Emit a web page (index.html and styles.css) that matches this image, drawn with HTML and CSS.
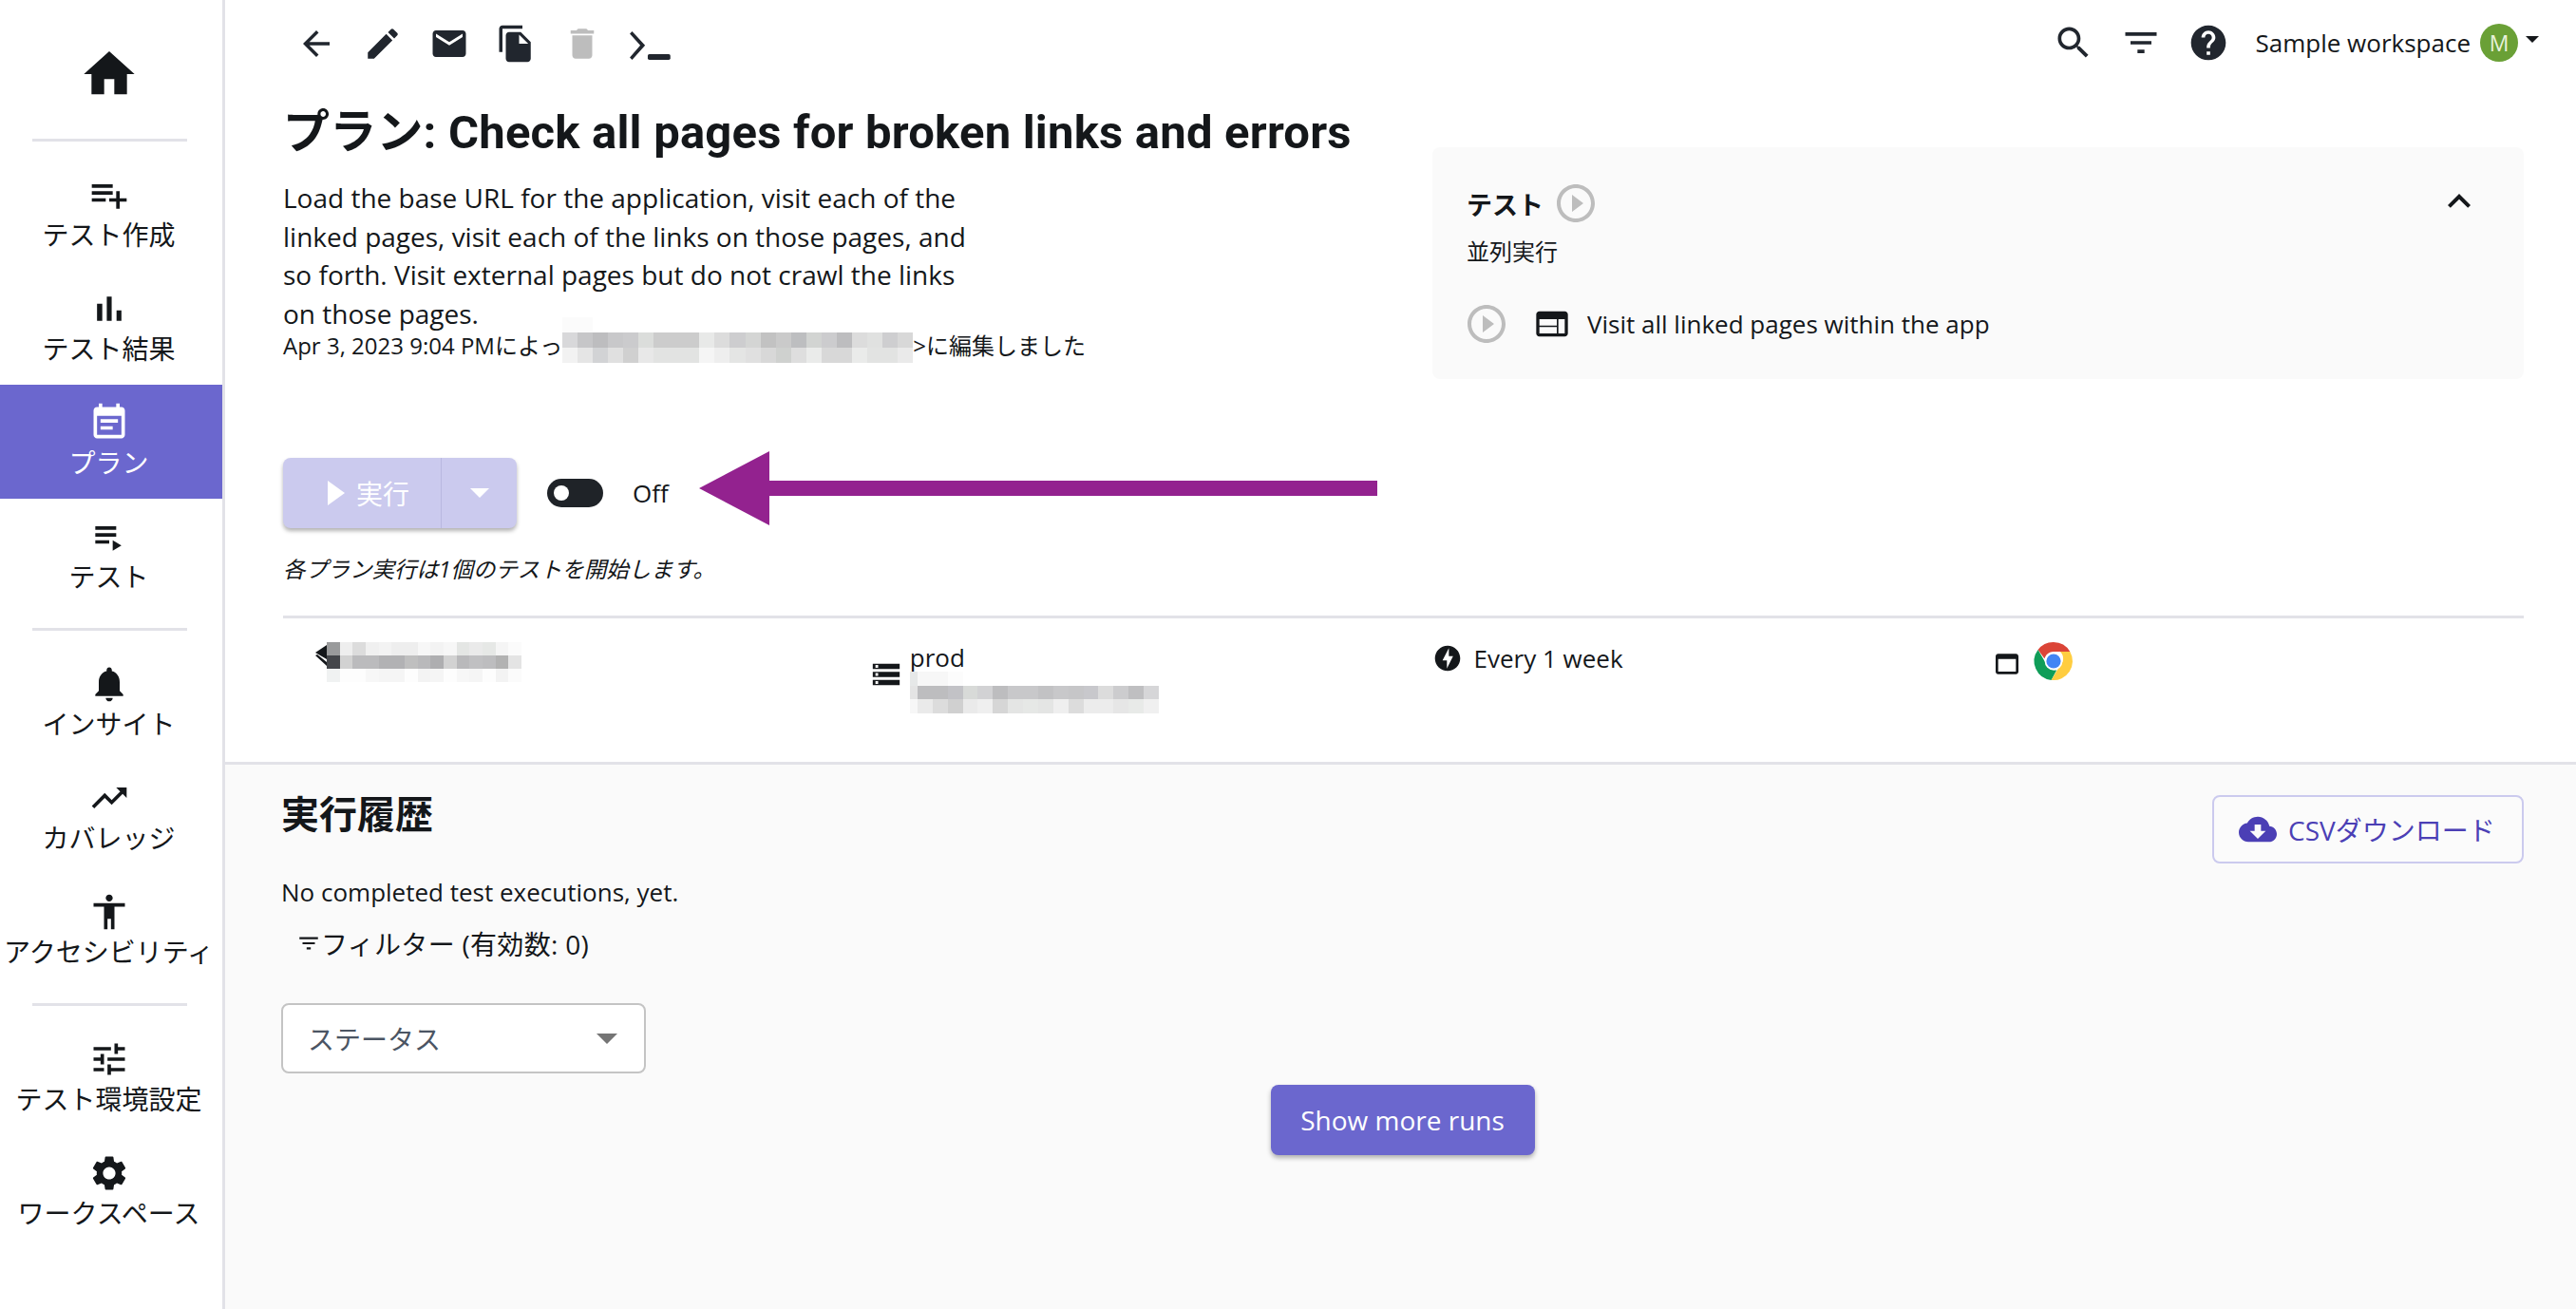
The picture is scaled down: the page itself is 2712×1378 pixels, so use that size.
FILE: index.html
```html
<!DOCTYPE html>
<html lang="ja">
  <head>
    <meta charset="UTF-8" />
    <meta name="viewport" content="width=device-width, initial-scale=1.0" />
    <title>プラン</title>
    <link rel="stylesheet" href="styles.css">
  </head>
  <body>
    <nav class="sidebar">
      <a class="nav-home"><svg class="icon-home" viewBox="0 0 24 24"><path d="M10 20v-6h4v6h5v-8h3L12 3 2 12h3v8z"/></svg></a>
      <div class="nav-line"></div>
      <a class="nav-item"><svg viewBox="0 0 24 24"><path d="M14 10H2v2h12v-2zm0-4H2v2h12V6zm4 8v-4h-2v4h-4v2h4v4h2v-4h4v-2h-4zM2 16h8v-2H2v2z"/></svg><span>テスト作成</span></a>
      <a class="nav-item"><svg viewBox="0 0 24 24"><path d="M5 9.2h3V19H5zM10.6 5h2.8v14h-2.8zm5.6 8H19v6h-2.8z"/></svg><span>テスト結果</span></a>
      <a class="nav-item active"><svg viewBox="0 0 24 24"><path d="M17 10H7v2h10v-2zm2-7h-1V1h-2v2H8V1H6v2H5c-1.11 0-1.99.9-1.99 2L3 19c0 1.1.89 2 2 2h14c1.1 0 2-.9 2-2V5c0-1.1-.9-2-2-2zm0 16H5V8h14v11zm-5-5H7v2h7v-2z"/></svg><span>プラン</span></a>
      <a class="nav-item"><svg viewBox="0 0 24 24"><path d="M4 10h12v2H4zm0-4h12v2H4zm0 8h8v2H4zm10 0v6l5-3z"/></svg><span>テスト</span></a>
      <div class="nav-line"></div>
      <a class="nav-item"><svg viewBox="0 0 24 24"><path d="M12 22c1.1 0 2-.9 2-2h-4c0 1.1.89 2 2 2zm6-6v-5c0-3.07-1.64-5.64-4.5-6.32V4c0-.83-.67-1.5-1.5-1.5s-1.5.67-1.5 1.5v.68C7.63 5.36 6 7.92 6 11v5l-2 2v1h16v-1l-2-2z"/></svg><span>インサイト</span></a>
      <a class="nav-item"><svg viewBox="0 0 24 24"><path d="M16 6l2.29 2.29-4.88 4.88-4-4L2 16.59 3.41 18l6-6 4 4 6.3-6.29L22 12V6z"/></svg><span>カバレッジ</span></a>
      <a class="nav-item"><svg viewBox="0 0 24 24"><path d="M12 2c1.1 0 2 .9 2 2s-.9 2-2 2-2-.9-2-2 .9-2 2-2zm9 7h-6v13h-2v-6h-2v6H9V9H3V7h18v2z"/></svg><span>アクセシビリティ</span></a>
      <div class="nav-line"></div>
      <a class="nav-item"><svg viewBox="0 0 24 24"><path d="M3 17v2h6v-2H3zM3 5v2h10V5H3zm10 16v-2h8v-2h-8v-2h-2v6h2zM7 9v2H3v2h4v2h2V9H7zm14 4v-2H11v2h10zm-6-4h2V7h4V5h-4V3h-2v6z"/></svg><span>テスト環境設定</span></a>
      <a class="nav-item"><svg viewBox="0 0 24 24"><path d="M19.14 12.94c.04-.3.06-.61.06-.94 0-.32-.02-.64-.07-.94l2.03-1.58c.18-.14.23-.41.12-.61l-1.92-3.32c-.12-.22-.37-.29-.59-.22l-2.39.96c-.5-.38-1.03-.7-1.62-.94l-.36-2.54c-.04-.24-.24-.41-.48-.41h-3.84c-.24 0-.43.17-.47.41l-.36 2.54c-.59.24-1.13.57-1.62.94l-2.39-.96c-.22-.08-.47 0-.59.22L2.74 8.87c-.12.21-.08.47.12.61l2.03 1.58c-.05.3-.09.63-.09.94s.02.64.07.94l-2.03 1.58c-.18.14-.23.41-.12.61l1.92 3.32c.12.22.37.29.59.22l2.39-.96c.5.38 1.03.7 1.62.94l.36 2.54c.05.24.24.41.48.41h3.84c.24 0 .44-.17.47-.41l.36-2.54c.59-.24 1.13-.56 1.62-.94l2.39.96c.22.08.47 0 .59-.22l1.92-3.32c.12-.22.07-.47-.12-.61l-2.01-1.58zM12 15.6c-1.98 0-3.6-1.62-3.6-3.6s1.62-3.6 3.6-3.6 3.6 1.62 3.6 3.6-1.62 3.6-3.6 3.6z"/></svg><span>ワークスペース</span></a>
    </nav>

    <main class="main">
      <div class="toolbar">
        <div class="toolbar-left">
          <svg class="tool" viewBox="0 0 24 24"><path d="M20 11H7.83l5.59-5.59L12 4l-8 8 8 8 1.41-1.41L7.83 13H20v-2z"/></svg>
          <svg class="tool" viewBox="0 0 24 24"><path d="M3 17.25V21h3.75L17.81 9.94l-3.75-3.75L3 17.25zM20.71 7.04c.39-.39.39-1.02 0-1.41l-2.34-2.34c-.39-.39-1.02-.39-1.41 0l-1.83 1.83 3.75 3.75 1.83-1.83z"/></svg>
          <svg class="tool" viewBox="0 0 24 24"><path d="M20 4H4c-1.1 0-1.99.9-1.99 2L2 18c0 1.1.9 2 2 2h16c1.1 0 2-.9 2-2V6c0-1.1-.9-2-2-2zm0 4l-8 5-8-5V6l8 5 8-5v2z"/></svg>
          <svg class="tool" viewBox="0 0 24 24"><path d="M16 1H4c-1.1 0-2 .9-2 2v14h2V3h12V1zm-1 4l6 6v10c0 1.1-.9 2-2 2H7.99C6.89 23 6 22.1 6 21l.01-14c0-1.1.89-2 1.99-2h7zm-1 7h5.5L14 6.5V12z"/></svg>
          <svg class="tool tool-off" viewBox="0 0 24 24"><path d="M6 19c0 1.1.9 2 2 2h8c1.1 0 2-.9 2-2V7H6v12zM19 4h-3.5l-1-1h-5l-1 1H5v2h14V4z"/></svg>
          <svg class="tool tool-term" viewBox="0 0 24 24"><path d="M.6 6 2 4.6 9.8 13 2 21.7.6 20.3 6.9 13z"/><rect x="11.4" y="18.3" width="13.6" height="3.4" rx="1"/></svg>
        </div>
        <div class="toolbar-right">
          <svg class="tool-lg" viewBox="0 0 24 24"><path d="M15.5 14h-.79l-.28-.27C15.41 12.59 16 11.11 16 9.5 16 5.91 13.09 3 9.5 3S3 5.91 3 9.5 5.91 16 9.5 16c1.61 0 3.09-.59 4.23-1.57l.27.28v.79l5 4.99L20.49 19l-4.99-5zm-6 0C7.01 14 5 11.99 5 9.5S7.01 5 9.5 5 14 7.01 14 9.5 11.99 14 9.5 14z"/></svg>
          <svg class="tool-lg" viewBox="0 0 24 24"><path d="M10 18h4v-2h-4v2zM3 6v2h18V6H3zm3 7h12v-2H6v2z"/></svg>
          <svg class="tool-lg" viewBox="0 0 24 24"><path d="M12 2C6.48 2 2 6.48 2 12s4.48 10 10 10 10-4.48 10-10S17.52 2 12 2zm1 17h-2v-2h2v2zm2.07-7.75l-.9.92C13.45 12.9 13 13.5 13 15h-2v-.5c0-1.1.45-2.1 1.17-2.83l1.24-1.26c.37-.36.59-.86.59-1.41 0-1.1-.9-2-2-2s-2 .9-2 2H8c0-2.21 1.79-4 4-4s4 1.79 4 4c0 .88-.36 1.68-.93 2.25z"/></svg>
          <span class="workspace">Sample workspace</span>
          <span class="avatar">M</span>
          <span class="caret"></span>
        </div>
      </div>

      <section class="plan">
        <div class="plan-top">
          <div class="plan-info">
            <h1>プラン: Check all pages for broken links and errors</h1>
            <p class="desc">Load the base URL for the application, visit each of the linked pages, visit each of the links on those pages, and so forth. Visit external pages but do not crawl the links on those pages.</p>
            <div class="edited">
              <span>Apr 3, 2023 9:04 PMによっ</span>
              <svg class="mosaic" width="369" height="48" viewBox="0 0 23 3" preserveAspectRatio="none" shape-rendering="crispEdges">
                <g><rect x="0" y="0" width="2" height="1" fill="#fbfbfb"/></g>
                <rect x="0" y="1" width="1" height="1" fill="#d8d8da"/><rect x="1" y="1" width="1" height="1" fill="#c6c6c8"/><rect x="2" y="1" width="1" height="1" fill="#bdbdbf"/><rect x="3" y="1" width="1" height="1" fill="#c8c8ca"/><rect x="4" y="1" width="1" height="1" fill="#cbcbcd"/><rect x="5" y="1" width="1" height="1" fill="#dbdddb"/><rect x="6" y="1" width="3" height="1" fill="#cccccc"/><rect x="9" y="1" width="1" height="1" fill="#e8e9e8"/><rect x="10" y="1" width="1" height="1" fill="#dcdcdc"/><rect x="11" y="1" width="1" height="1" fill="#cdcdcf"/><rect x="12" y="1" width="1" height="1" fill="#d4d5d4"/><rect x="13" y="1" width="1" height="1" fill="#c2c2c2"/><rect x="14" y="1" width="1" height="1" fill="#cacaca"/><rect x="15" y="1" width="1" height="1" fill="#bdbec0"/><rect x="16" y="1" width="1" height="1" fill="#d2d4d2"/><rect x="17" y="1" width="1" height="1" fill="#ccccce"/><rect x="18" y="1" width="1" height="1" fill="#bdbdbf"/><rect x="19" y="1" width="1" height="1" fill="#dcdcdc"/><rect x="20" y="1" width="1" height="1" fill="#e0e1e0"/><rect x="21" y="1" width="1" height="1" fill="#ceced0"/><rect x="22" y="1" width="1" height="1" fill="#d8d8d8"/>
                <rect x="0" y="2" width="1" height="1" fill="#f2f2f2"/><rect x="1" y="2" width="1" height="1" fill="#e5e5e5"/><rect x="2" y="2" width="1" height="1" fill="#d2d3d5"/><rect x="3" y="2" width="1" height="1" fill="#e0e0e0"/><rect x="4" y="2" width="1" height="1" fill="#d0d0d0"/><rect x="5" y="2" width="1" height="1" fill="#e8e8e8"/><rect x="6" y="2" width="3" height="1" fill="#e2e3e2"/><rect x="9" y="2" width="1" height="1" fill="#f5f5f5"/><rect x="10" y="2" width="1" height="1" fill="#eeeeee"/><rect x="11" y="2" width="1" height="1" fill="#e4e5e4"/><rect x="12" y="2" width="1" height="1" fill="#e0e0e0"/><rect x="13" y="2" width="1" height="1" fill="#d8d8d8"/><rect x="14" y="2" width="1" height="1" fill="#cfd1cf"/><rect x="15" y="2" width="1" height="1" fill="#dedede"/><rect x="16" y="2" width="1" height="1" fill="#eaebea"/><rect x="17" y="2" width="2" height="1" fill="#d8d8d8"/><rect x="19" y="2" width="1" height="1" fill="#eaebea"/><rect x="20" y="2" width="2" height="1" fill="#e2e3e2"/><rect x="22" y="2" width="1" height="1" fill="#eaeaea"/>
              </svg>
              <span>&gt;に編集しました</span>
            </div>
            <div class="run-row">
              <div class="run-btn">
                <span class="run-main"><i class="play"></i>実行</span>
                <span class="run-drop"><i></i></span>
              </div>
              <span class="toggle"><i></i></span>
              <span class="off">Off</span>
            </div>
            <p class="note">各プラン実行は1個のテストを開始します。</p>
          </div>

          <aside class="panel">
            <div class="panel-head">
              <div class="panel-title">
                <strong>テスト</strong>
                <svg class="play-ring" viewBox="0 0 24 24"><path d="M10 16.5l6-4.5-6-4.5v9zM12 2C6.48 2 2 6.48 2 12s4.48 10 10 10 10-4.48 10-10S17.52 2 12 2zm0 18c-4.41 0-8-3.59-8-8s3.59-8 8-8 8 3.59 8 8-3.59 8-8 8z"/></svg>
              </div>
              <svg class="chevron" viewBox="0 0 24 24"><path d="M12 8l-6 6 1.41 1.41L12 10.83l4.59 4.58L18 14z"/></svg>
            </div>
            <div class="panel-sub">並列実行</div>
            <div class="panel-test">
              <svg class="play-ring test-ring" viewBox="0 0 24 24"><path d="M10 16.5l6-4.5-6-4.5v9zM12 2C6.48 2 2 6.48 2 12s4.48 10 10 10 10-4.48 10-10S17.52 2 12 2zm0 18c-4.41 0-8-3.59-8-8s3.59-8 8-8 8 3.59 8 8-3.59 8-8 8z"/></svg>
              <svg class="web-icon" viewBox="0 0 24 24"><path d="M20 4H4c-1.1 0-1.99.9-1.99 2L2 18c0 1.1.9 2 2 2h16c1.1 0 2-.9 2-2V6c0-1.1-.9-2-2-2zm-5 14H4v-4h11v4zm0-5H4V9h11v4zm5 5h-4V9h4v9z"/></svg>
              <span>Visit all linked pages within the app</span>
            </div>
          </aside>
        </div>

        <div class="plan-meta">
          <div class="meta-col">
            <svg class="branch-icon" width="12" height="25" viewBox="0 0 12 25"><path d="M12 0v15L0 8zM0 11l2-1 10 8v4z"/></svg>
            <svg class="mosaic-a" width="205" height="42" viewBox="0 0 15 3" preserveAspectRatio="none" shape-rendering="crispEdges">
              <rect x="0" y="0" width="1" height="1" fill="#999a9b"/><rect x="1" y="0" width="1" height="1" fill="#eeeeee"/><rect x="2" y="0" width="1" height="1" fill="#dcdcdc"/><rect x="3" y="0" width="1" height="1" fill="#f0f0f0"/><rect x="4" y="0" width="1" height="1" fill="#f3f3f3"/><rect x="5" y="0" width="2" height="1" fill="#eeeeee"/><rect x="7" y="0" width="1" height="1" fill="#f7f7f7"/><rect x="8" y="0" width="1" height="1" fill="#f3f3f3"/><rect x="9" y="0" width="1" height="1" fill="#f7f7f7"/><rect x="10" y="0" width="1" height="1" fill="#e4e6e4"/><rect x="11" y="0" width="1" height="1" fill="#eaeaea"/><rect x="12" y="0" width="1" height="1" fill="#e6e8e6"/><rect x="13" y="0" width="1" height="1" fill="#f5f5f5"/><rect x="14" y="0" width="1" height="1" fill="#fbfbfb"/>
              <rect x="0" y="1" width="1" height="1" fill="#44464a"/><rect x="1" y="1" width="1" height="1" fill="#d2d2d2"/><rect x="2" y="1" width="2" height="1" fill="#bbbbbd"/><rect x="4" y="1" width="2" height="1" fill="#b2b2b4"/><rect x="6" y="1" width="1" height="1" fill="#bfbfbf"/><rect x="7" y="1" width="1" height="1" fill="#b9b9bb"/><rect x="8" y="1" width="1" height="1" fill="#aeaeb0"/><rect x="9" y="1" width="1" height="1" fill="#d2d2d2"/><rect x="10" y="1" width="1" height="1" fill="#b9b9bb"/><rect x="11" y="1" width="1" height="1" fill="#c0c0c2"/><rect x="12" y="1" width="1" height="1" fill="#bdbdbf"/><rect x="13" y="1" width="1" height="1" fill="#b2b2b2"/><rect x="14" y="1" width="1" height="1" fill="#e4e4e4"/>
              <rect x="0" y="2" width="1" height="1" fill="#f0f2f2"/><rect x="1" y="2" width="2" height="1" fill="#fdfdfd"/><rect x="3" y="2" width="1" height="1" fill="#f7f7f7"/><rect x="4" y="2" width="2" height="1" fill="#f5f5f5"/><rect x="6" y="2" width="1" height="1" fill="#fdfdfd"/><rect x="7" y="2" width="1" height="1" fill="#f3f3f3"/><rect x="8" y="2" width="1" height="1" fill="#f5f5f5"/><rect x="9" y="2" width="1" height="1" fill="#fdfdfd"/><rect x="10" y="2" width="1" height="1" fill="#f7f7f7"/><rect x="11" y="2" width="1" height="1" fill="#f5f5f5"/><rect x="12" y="2" width="1" height="1" fill="#fdfdfd"/><rect x="13" y="2" width="1" height="1" fill="#f3f3f3"/><rect x="14" y="2" width="1" height="1" fill="#fbfbfb"/>
            </svg>
          </div>
          <div class="meta-col">
            <svg class="server-icon" viewBox="0 0 24 24"><path d="M2 20h20v-4H2v4zm2-3h2v2H4v-2zM2 4v4h20V4H2zm4 3H4V5h2v2zm-4 7h20v-4H2v4zm2-3h2v2H4v-2z"/></svg>
            <div class="env">
              <span>prod</span>
              <svg class="mosaic-b" width="262" height="44" viewBox="0 0 33 3" preserveAspectRatio="none" shape-rendering="crispEdges">
                <rect x="0" y="0" width="1" height="1" fill="#e6e8e8"/><rect x="1" y="0" width="4" height="1" fill="#f7f7f7"/><rect x="5" y="0" width="2" height="1" fill="#fcfcfc"/>
                <rect x="0" y="1" width="1" height="1" fill="#e4e4e4"/><rect x="1" y="1" width="4" height="1" fill="#bdbdbf"/><rect x="5" y="1" width="2" height="1" fill="#c2c2c6"/><rect x="7" y="1" width="2" height="1" fill="#d8dad8"/><rect x="9" y="1" width="2" height="1" fill="#d2d2d4"/><rect x="11" y="1" width="2" height="1" fill="#bdbdbf"/><rect x="13" y="1" width="4" height="1" fill="#c8c8ca"/><rect x="17" y="1" width="2" height="1" fill="#c2c2c4"/><rect x="19" y="1" width="2" height="1" fill="#c8c8ca"/><rect x="21" y="1" width="2" height="1" fill="#c6c6c8"/><rect x="23" y="1" width="2" height="1" fill="#c8c8cc"/><rect x="25" y="1" width="2" height="1" fill="#dcdcdc"/><rect x="27" y="1" width="2" height="1" fill="#ccccce"/><rect x="29" y="1" width="2" height="1" fill="#bfbfc1"/><rect x="31" y="1" width="2" height="1" fill="#d6d6d8"/>
                <rect x="0" y="2" width="1" height="1" fill="#f7f7f7"/><rect x="1" y="2" width="2" height="1" fill="#eaeaea"/><rect x="3" y="2" width="2" height="1" fill="#dcdcdc"/><rect x="5" y="2" width="2" height="1" fill="#d0d0d0"/><rect x="7" y="2" width="2" height="1" fill="#eaeaea"/><rect x="9" y="2" width="2" height="1" fill="#efefef"/><rect x="11" y="2" width="2" height="1" fill="#d6d6d6"/><rect x="13" y="2" width="2" height="1" fill="#e4e5e4"/><rect x="15" y="2" width="2" height="1" fill="#e6e8e6"/><rect x="17" y="2" width="2" height="1" fill="#e4e5e4"/><rect x="19" y="2" width="2" height="1" fill="#efefef"/><rect x="21" y="2" width="2" height="1" fill="#dcdcdc"/><rect x="23" y="2" width="4" height="1" fill="#ececec"/><rect x="27" y="2" width="2" height="1" fill="#e6e6e6"/><rect x="29" y="2" width="2" height="1" fill="#e8eae8"/><rect x="31" y="2" width="2" height="1" fill="#f0f0f0"/>
              </svg>
            </div>
          </div>
          <div class="meta-col">
            <svg class="bolt-icon" viewBox="0 0 24 24"><path d="M12 2.02c-5.51 0-9.98 4.47-9.98 9.98s4.47 9.98 9.98 9.98 9.98-4.47 9.98-9.98S17.51 2.02 12 2.02zM11.48 20v-6.26H8L13 4v6.26h3.35L11.48 20z"/></svg>
            <span class="every">Every 1 week</span>
          </div>
          <div class="meta-col">
            <svg class="asset-icon" viewBox="0 0 24 24"><path d="M19 4H5c-1.11 0-2 .9-2 2v12c0 1.1.89 2 2 2h14c1.1 0 2-.9 2-2V6c0-1.1-.89-2-2-2zm0 14H5V8h14v10z"/></svg>
            <svg class="chrome" viewBox="0 0 48 48">
              <path fill="#db4437" d="M24 4a20 20 0 0 1 17.3 10H24a10 10 0 0 0-9.6 7.2L7.6 12A20 20 0 0 1 24 4z"/>
              <path fill="#0f9d58" d="M7.6 12l8.7 15a10 10 0 0 0 10.9 6.5L21.6 43.9A20 20 0 0 1 7.6 12z"/>
              <path fill="#ffcd40" d="M41.3 14A20 20 0 0 1 21.6 43.9l8.8-14.9A10 10 0 0 0 31 14z"/>
              <circle cx="24" cy="24" r="9.4" fill="#fff"/>
              <circle cx="24" cy="24" r="7.6" fill="#4285f4"/>
            </svg>
          </div>
        </div>
      </section>

      <section class="history">
        <div class="history-head">
          <h2>実行履歴</h2>
          <a class="csv-btn">
            <svg viewBox="0 0 24 24"><path d="M19.35 10.04C18.67 6.59 15.64 4 12 4 9.11 4 6.6 5.64 5.35 8.04 2.34 8.36 0 10.91 0 14c0 3.31 2.69 6 6 6h13c2.76 0 5-2.24 5-5 0-2.64-2.05-4.78-4.65-4.96zM17 13l-5 5-5-5h3V9h4v4h3z"/></svg>
            CSVダウンロード
          </a>
        </div>
        <p class="empty">No completed test executions, yet.</p>
        <div class="filter-toggle">
          <svg viewBox="0 0 24 24"><path d="M10 18h4v-2h-4v2zM3 6v2h18V6H3zm3 7h12v-2H6v2z"/></svg>
          <span>フィルター (有効数: 0)</span>
        </div>
        <div class="select-box"><span>ステータス</span><i></i></div>
        <div class="more-row"><a class="more-btn">Show more runs</a></div>
      </section>

      <svg class="arrow" width="714" height="78" viewBox="0 0 714 78"><path d="M0 39 74 0v31h640v16H74v31z"/></svg>
    </main>
  </body>
</html>
```

FILE: styles.css
```css
* {
  box-sizing: border-box;
  margin: 0;
  padding: 0;
}

body {
  display: flex;
  min-height: 100vh;
  overflow: hidden;
  background-color: #fff;
  color: #14171a;
  font-family: "Open Sans", "Noto Sans CJK JP", sans-serif;
  font-size: 28px;
}

svg {
  display: block;
  flex-shrink: 0;
  fill: currentColor;
}

/* sidebar */
.sidebar {
  width: 237px;
  flex-shrink: 0;
  border-right: 3px solid #e2e2e8;
  font-family: "Noto Sans CJK JP", sans-serif;
}

.nav-home {
  display: flex;
  justify-content: center;
  height: 130px;
  padding: 46px 5px 0 0;
}

.icon-home {
  width: 64px;
  height: 64px;
}

.nav-line {
  width: 163px;
  height: 3px;
  margin: 16px 0 16px 34px;
  background-color: #e2e2e8;
}

.nav-item {
  display: flex;
  flex-direction: column;
  align-items: center;
  height: 120px;
  padding: 18px 5px 0 0;
  white-space: nowrap;
}

.nav-item svg {
  width: 44px;
  height: 44px;
}

.nav-item span {
  line-height: 38px;
}

.nav-item.active {
  background-color: #6b67ce;
  color: #fff;
}

/* main */
.main {
  position: relative;
  flex: 1;
  display: flex;
  flex-direction: column;
}

.toolbar {
  display: flex;
  justify-content: space-between;
  align-items: center;
  height: 92px;
  padding: 0 39px 0 298px;
  margin-left: -237px;
  color: #21262e;
}

.toolbar-left {
  display: flex;
  gap: 28px;
  padding-left: 14px;
}

.tool {
  width: 42px;
  height: 42px;
}

.tool-off {
  color: #bdbdbd;
}

.tool-term {
  overflow: visible;
}

.tool-lg {
  width: 44px;
  height: 44px;
}

.toolbar-right {
  display: flex;
  align-items: center;
  gap: 27px;
  margin-top: -2px;
}

.workspace {
  margin-left: 1px;
  font-size: 26px;
  color: #14171a;
}

.avatar {
  display: flex;
  justify-content: center;
  align-items: center;
  width: 40px;
  height: 40px;
  margin-left: -17px;
  border-radius: 50%;
  background-color: #6aa036;
  color: #e8f2dc;
  font-size: 23px;
}

.caret {
  width: 0;
  height: 0;
  margin: -8px 0 0 -19px;
  border-left: 7px solid transparent;
  border-right: 7px solid transparent;
  border-top: 7px solid #14171a;
}

.plan {
  padding: 0 55px 0 61px;
}

.plan-top {
  display: flex;
}

.plan-info {
  width: 1210px;
  flex-shrink: 0;
}

h1 {
  margin-top: 18px;
  font-family: "Roboto", "Noto Sans CJK JP", sans-serif;
  font-size: 49px;
  font-weight: 700;
  letter-spacing: 0.2px;
  line-height: 60px;
  white-space: nowrap;
}

.desc {
  width: 740px;
  margin-top: 18px;
  line-height: 40.5px;
}

.edited {
  display: flex;
  align-items: center;
  height: 26px;
  margin-top: -1px;
  font-size: 24px;
  white-space: nowrap;
}

.mosaic {
  margin-top: -8px;
}

.run-row {
  display: flex;
  align-items: center;
  margin-top: 107px;
}

.run-btn {
  display: flex;
  width: 246px;
  height: 74px;
  border-radius: 8px;
  background-color: #cbcaee;
  color: #fff;
  box-shadow: 0 3px 4px rgba(0, 0, 0, 0.3);
}

.run-main {
  display: flex;
  justify-content: center;
  align-items: center;
  gap: 12px;
  width: 167px;
  padding-left: 14px;
  border-right: 1px solid #b9b8e0;
}

.play {
  width: 0;
  height: 0;
  border-top: 13px solid transparent;
  border-bottom: 13px solid transparent;
  border-left: 18px solid #fff;
}

.run-drop {
  flex: 1;
  display: flex;
  justify-content: center;
  align-items: center;
}

.run-drop i {
  width: 0;
  height: 0;
  border-left: 10px solid transparent;
  border-right: 10px solid transparent;
  border-top: 10px solid #fff;
}

.toggle {
  display: flex;
  align-items: center;
  width: 59px;
  height: 30px;
  margin-left: 32px;
  padding-left: 7px;
  border-radius: 15px;
  background-color: #1f2328;
}

.toggle i {
  width: 16px;
  height: 16px;
  border-radius: 50%;
  background-color: #fff;
}

.off {
  margin-left: 31px;
  font-size: 26px;
}

.note {
  margin-top: 26px;
  font-size: 23.4px;
  font-style: italic;
  line-height: 34px;
}

.panel {
  flex: 1;
  height: 244px;
  margin-top: 63px;
  padding: 36px 36px 0;
  border-radius: 8px;
  background-color: #fafafa;
}

.panel-head {
  display: flex;
  justify-content: space-between;
  align-items: center;
  height: 46px;
}

.panel-title {
  display: flex;
  align-items: center;
  gap: 10px;
}

.panel-title strong {
  font-size: 27px;
}

.play-ring {
  width: 48px;
  height: 48px;
  color: #bdbdbd;
}

.test-ring {
  margin-left: -3px;
}

.chevron {
  width: 48px;
  height: 48px;
  margin: -4px 8px 0 0;
}

.panel-sub {
  margin-top: 11px;
  font-size: 24px;
  line-height: 34px;
}

.panel-test {
  display: flex;
  align-items: center;
  height: 46px;
  margin-top: 36px;
  font-size: 26px;
}

.web-icon {
  width: 40px;
  height: 40px;
  margin-left: 25px;
  margin-right: 17px;
}

.plan-meta {
  display: grid;
  grid-template-columns: repeat(4, 1fr);
  height: 154px;
  margin-top: 32px;
  padding-top: 18px;
  border-top: 3px solid #e2e2e8;
  font-size: 26px;
}

.meta-col {
  display: flex;
  align-items: flex-start;
  padding-left: 32px;
}

.branch-icon {
  margin: 10px 0 0 2px;
}

.mosaic-a {
  margin-top: 7px;
}

.server-icon {
  width: 34px;
  height: 34px;
  margin: 24px 8px 0 -4px;
}

.env {
  margin-top: 5px;
  line-height: 36px;
}

.mosaic-b {
  margin-top: -3px;
}

.bolt-icon {
  width: 32px;
  height: 32px;
  margin: 8px 12px 0 -2px;
}

.every {
  margin-top: 6px;
}

.asset-icon {
  width: 32px;
  height: 32px;
  margin: 14px 9px 0 -2px;
}

.chrome {
  width: 48px;
  height: 48px;
  margin-top: 3px;
}

/* history */
.history {
  flex: 1;
  padding: 32px 55px 0 59px;
  border-top: 3px solid #e2e2e8;
  background-color: #fafafa;
}

.history-head {
  display: flex;
  justify-content: space-between;
  align-items: flex-start;
}

h2 {
  font-size: 40px;
  font-weight: 700;
  line-height: 40px;
}

.csv-btn {
  display: flex;
  align-items: center;
  gap: 12px;
  width: 328px;
  height: 72px;
  padding-left: 26px;
  border: 2px solid #cbcaee;
  border-radius: 8px;
  color: #4b3fb5;
  background-color: #fbfbfb;
}

.csv-btn svg {
  width: 40px;
  height: 40px;
}

.empty {
  margin-top: 10px;
  font-size: 26px;
  line-height: 40px;
}

.filter-toggle {
  display: flex;
  align-items: center;
  height: 40px;
  margin-top: 14px;
  padding-left: 16px;
  letter-spacing: 0.3px;
}

.filter-toggle svg {
  width: 26px;
  height: 26px;
}

.select-box {
  display: flex;
  justify-content: space-between;
  align-items: center;
  width: 384px;
  height: 74px;
  margin-top: 43px;
  padding: 0 28px 0 26px;
  border: 2px solid #c4c4c4;
  border-radius: 8px;
  background-color: #fff;
  color: #4b5563;
}

.select-box i {
  width: 0;
  height: 0;
  border-left: 11px solid transparent;
  border-right: 11px solid transparent;
  border-top: 11px solid #757575;
}

.more-row {
  display: flex;
  justify-content: center;
  margin-top: 12px;
}

.more-btn {
  display: flex;
  justify-content: center;
  align-items: center;
  width: 278px;
  height: 74px;
  border-radius: 8px;
  background-color: #6b67ce;
  color: #fff;
  box-shadow: 0 3px 5px rgba(0, 0, 0, 0.3);
}

/* annotation drawn on top of the screenshot */
.arrow {
  position: absolute;
  left: 499px;
  top: 475px;
  fill: #93228f;
}
```
